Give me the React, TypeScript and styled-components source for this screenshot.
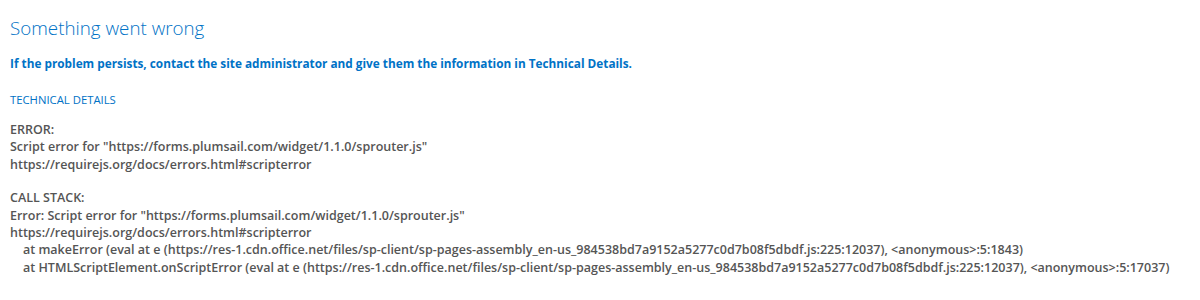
import React from "react";
import styled, { createGlobalStyle } from "styled-components";

const Global = createGlobalStyle`
  html, body { margin: 0; padding: 0; background: #fff; }
  body { font-family: "Open Sans", "Noto Sans", sans-serif; }
`;

const Page = styled.div`
  padding: 15px 10px;
  display: flex;
  flex-direction: column;
`;

const Title = styled.h1`
  margin: 0;
  font-size: 18.8px;
  font-weight: 300;
  color: #0072c6;
  line-height: 26px;
`;

const Lead = styled.p`
  margin: 14px 0 0;
  font-size: 11.8px;
  font-weight: 700;
  color: #0072c6;
  line-height: 17px;
`;

const SectionLabel = styled.div`
  margin-top: 20px;
  font-size: 11.3px;
  color: #0072c6;
  text-transform: uppercase;
  line-height: 16px;
`;

const Block = styled.div<{ $gap: number }>`
  margin-top: ${(p) => p.$gap}px;
  font-size: 12.5px;
  font-weight: 600;
  color: #555;
  line-height: 17.3px;
`;

const Line = styled.div<{ $indent?: boolean }>`
  padding-left: ${(p) => (p.$indent ? "13px" : "0")};
  white-space: nowrap;
`;

export default function App() {
  return (
    <>
      <Global />
      <Page>
        <Title>Something went wrong</Title>
        <Lead>
          If the problem persists, contact the site administrator and give them the information in Technical Details.
        </Lead>
        <SectionLabel>Technical Details</SectionLabel>
        <Block $gap={13}>
          <Line>ERROR:</Line>
          <Line>Script error for "https://forms.plumsail.com/widget/1.1.0/sprouter.js"</Line>
          <Line>https://requirejs.org/docs/errors.html#scripterror</Line>
        </Block>
        <Block $gap={16.6}>
          <Line>CALL STACK:</Line>
          <Line>Error: Script error for "https://forms.plumsail.com/widget/1.1.0/sprouter.js"</Line>
          <Line>https://requirejs.org/docs/errors.html#scripterror</Line>
          <Line $indent>
            at makeError (eval at e (https://res-1.cdn.office.net/files/sp-client/sp-pages-assembly_en-us_984538bd7a9152a5277c0d7b08f5dbdf.js:225:12037), &lt;anonymous&gt;:5:1843)
          </Line>
          <Line $indent>
            at HTMLScriptElement.onScriptError (eval at e (https://res-1.cdn.office.net/files/sp-client/sp-pages-assembly_en-us_984538bd7a9152a5277c0d7b08f5dbdf.js:225:12037), &lt;anonymous&gt;:5:17037)
          </Line>
        </Block>
      </Page>
    </>
  );
}
